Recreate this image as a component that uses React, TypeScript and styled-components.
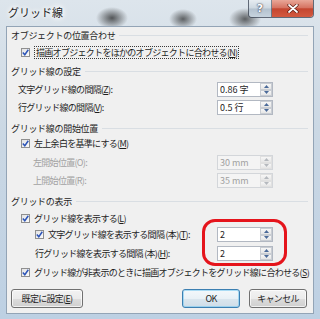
import React from 'react';
import styled, { createGlobalStyle } from 'styled-components';

const GlobalStyle = createGlobalStyle`
  html, body {
    margin: 0;
    padding: 0;
  }
  body {
    width: 320px;
    height: 319px;
    overflow: hidden;
    font-family: "Noto Sans CJK JP", "Noto Sans", sans-serif;
  }
`;

const Window = styled.div`
  position: relative;
  width: 320px;
  height: 319px;
  display: flex;
  flex-direction: column;
  background:
    radial-gradient(ellipse 16px 11px at 112px 18px, rgba(25, 25, 25, 0.7), rgba(25, 25, 25, 0)),
    radial-gradient(ellipse 14px 10px at 183px 19px, rgba(25, 25, 25, 0.65), rgba(25, 25, 25, 0)),
    radial-gradient(ellipse 16px 11px at 245px 19px, rgba(25, 25, 25, 0.65), rgba(25, 25, 25, 0)),
    linear-gradient(180deg, #dde5ec 0%, #cbd8e4 40%, #bdd0e3 100%);
`;

const TitleBar = styled.div`
  height: 26px;
  display: flex;
  justify-content: space-between;
  align-items: flex-start;
`;

const Title = styled.div`
  padding: 5px 0 0 8px;
  font-size: 11px;
  line-height: 14px;
  color: #1c1c1c;
  text-shadow: 0 0 4px #fff, 0 0 6px #fff, 0 0 8px #fff;
`;

const CaptionButtons = styled.div`
  display: flex;
  margin-right: 6px;
  height: 17px;
  border: 1px solid rgba(55, 65, 80, 0.75);
  border-top: none;
  border-radius: 0 0 4px 4px;
  overflow: hidden;
`;

const HelpButton = styled.div`
  width: 22px;
  display: flex;
  align-items: center;
  justify-content: center;
  background: linear-gradient(180deg, #e6ecf1 0%, #cdd7e0 48%, #b3c1ce 52%, #c6d3de 100%);
  border-right: 1px solid rgba(55, 65, 80, 0.6);
  color: #fff;
  font-family: "DejaVu Sans", sans-serif;
  font-weight: bold;
  font-size: 11px;
  text-shadow: 0 0 1px #334, 0 0 2px #334;
`;

const CloseButton = styled.div`
  width: 41px;
  display: flex;
  align-items: center;
  justify-content: center;
  background: linear-gradient(180deg, #e9a798 0%, #d67462 45%, #c44630 52%, #d35a40 100%);
`;

const Client = styled.div`
  flex: 1;
  margin: 0 6px 5px 6px;
  background: #f0f0f0;
  border: 1px solid #93a4b6;
  display: flex;
  flex-direction: column;
  font-size: 9px;
  letter-spacing: -0.7px;
  color: #1e1e1e;
`;

const GroupHeader = styled.div<{ $top: number }>`
  display: flex;
  align-items: center;
  gap: 4px;
  height: 14px;
  margin-top: ${p => p.$top}px;
  padding: 0 5px 0 4px;
  letter-spacing: -0.3px;
  white-space: nowrap;

  &::after {
    content: '';
    flex: 1;
    height: 1px;
    margin-top: 1px;
    background: #d9dee3;
  }
`;

const Row = styled.div<{ $top: number; $indent: number; $h?: number }>`
  display: flex;
  align-items: center;
  height: ${p => p.$h ?? 14}px;
  margin-top: ${p => p.$top}px;
  padding-left: ${p => p.$indent}px;
  padding-right: 40px;
  white-space: nowrap;
`;

const Label = styled.span<{ $disabled?: boolean }>`
  flex: 1;
  color: ${p => (p.$disabled ? '#a2a2a2' : '#1e1e1e')};
`;

const Key = styled.span`
  text-decoration: underline;
`;

const Box = styled.span`
  width: 9px;
  height: 9px;
  box-sizing: border-box;
  border: 1px solid #8f8f8f;
  background: linear-gradient(135deg, #e3e3e3 0%, #fbfbfb 100%);
  display: flex;
  align-items: center;
  justify-content: center;
  margin-right: 4px;
  flex: none;
`;

const Focus = styled.span`
  border: 1px dotted #3a3a3a;
  padding: 0 1px;
  line-height: 11px;
`;

const SpinBox = styled.div<{ $disabled?: boolean }>`
  display: flex;
  width: 56px;
  height: 15px;
  box-sizing: border-box;
  border: 1px solid ${p => (p.$disabled ? '#d3d6da' : '#b2b8c2')};
  background: ${p => (p.$disabled ? '#f4f4f4' : '#ffffff')};
  color: ${p => (p.$disabled ? '#a0a0a0' : '#1e1e1e')};
  letter-spacing: 0;
  flex: none;
`;

const SpinText = styled.div`
  flex: 1;
  padding-left: 2px;
  line-height: 13px;
`;

const SpinButtons = styled.div`
  width: 12px;
  display: flex;
  flex-direction: column;
`;

const SpinHalf = styled.div<{ $disabled?: boolean }>`
  flex: 1;
  display: flex;
  align-items: center;
  justify-content: center;
  box-sizing: border-box;
  border: 1px solid ${p => (p.$disabled ? '#e0e0e0' : '#c9cdd3')};
  background: linear-gradient(180deg, #f7f7f7 0%, #e6e6e6 100%);
`;

const ButtonRow = styled.div`
  display: flex;
  gap: 9px;
  height: 19px;
  margin-top: 10px;
  padding: 0 6px 0 4px;
`;

const Spacer = styled.div`
  flex: 1;
`;

const Button = styled.div<{ $w: number; $default?: boolean }>`
  width: ${p => p.$w}px;
  box-sizing: border-box;
  display: flex;
  align-items: center;
  justify-content: center;
  border: 1px solid ${p => (p.$default ? '#3c7fb1' : '#707070')};
  border-radius: 3px;
  background: ${p =>
    p.$default
      ? 'linear-gradient(180deg, #f3f8fb 0%, #e9f1f6 50%, #dae6ee 51%, #cfdde8 100%)'
      : 'linear-gradient(180deg, #f2f2f2 0%, #ebebeb 50%, #dddddd 51%, #cfcfcf 100%)'};
  box-shadow: inset 0 0 0 1px ${p => (p.$default ? 'rgba(120, 200, 240, 0.6)' : 'rgba(255, 255, 255, 0.7)')};
  color: #1e1e1e;
`;

const Annotation = styled.div`
  position: absolute;
  left: 202px;
  top: 219px;
  width: 85px;
  height: 47px;
  box-sizing: border-box;
  border: 3px solid #e5141c;
  border-radius: 13px;
  pointer-events: none;
`;

function Check() {
  return (
    <Box>
      <svg width="7" height="7" viewBox="0 0 7 7">
        <path d="M0.8 3.6 L2.8 5.8 L6.3 0.8" fill="none" stroke="#2d55b8" strokeWidth="1.5" />
      </svg>
    </Box>
  );
}

function Arrow({ up, disabled }: { up?: boolean; disabled?: boolean }) {
  return (
    <svg width="5" height="3" viewBox="0 0 5 3">
      <path d={up ? 'M0 3 L2.5 0 L5 3 Z' : 'M0 0 L2.5 3 L5 0 Z'} fill={disabled ? '#b5b9be' : '#4b6a99'} />
    </svg>
  );
}

function Spinner({ value, disabled }: { value: string; disabled?: boolean }) {
  return (
    <SpinBox $disabled={disabled}>
      <SpinText>{value}</SpinText>
      <SpinButtons>
        <SpinHalf $disabled={disabled}><Arrow up disabled={disabled} /></SpinHalf>
        <SpinHalf $disabled={disabled}><Arrow disabled={disabled} /></SpinHalf>
      </SpinButtons>
    </SpinBox>
  );
}

export default function App() {
  return (
    <>
      <GlobalStyle />
      <Window>
        <TitleBar>
          <Title>グリッド線</Title>
          <CaptionButtons>
            <HelpButton>?</HelpButton>
            <CloseButton>
              <svg width="12" height="9" viewBox="0 0 12 9">
                <path d="M2 1 L10 8 M10 1 L2 8" stroke="#5a1a10" strokeWidth="3.2" strokeLinecap="round" />
                <path d="M2 1 L10 8 M10 1 L2 8" stroke="#ffffff" strokeWidth="1.8" strokeLinecap="round" />
              </svg>
            </CloseButton>
          </CaptionButtons>
        </TitleBar>
        <Client>
          <GroupHeader $top={1}>オブジェクトの位置合わせ</GroupHeader>
          <Row $top={3} $indent={14}>
            <Check />
            <Focus>描画オブジェクトをほかのオブジェクトに合わせる(<Key>N</Key>)</Focus>
          </Row>

          <GroupHeader $top={5}>グリッド線の設定</GroupHeader>
          <Row $top={4} $indent={11} $h={15}>
            <Label>文字グリッド線の間隔(<Key>Z</Key>):</Label>
            <Spinner value="0.86 字" />
          </Row>
          <Row $top={3} $indent={11} $h={15}>
            <Label>行グリッド線の間隔(<Key>V</Key>):</Label>
            <Spinner value="0.5 行" />
          </Row>

          <GroupHeader $top={6}>グリッド線の開始位置</GroupHeader>
          <Row $top={1} $indent={14}>
            <Check />
            <Label>左上余白を基準にする(<Key>M</Key>)</Label>
          </Row>
          <Row $top={5} $indent={26} $h={15}>
            <Label $disabled>左開始位置(O):</Label>
            <Spinner value="30 mm" disabled />
          </Row>
          <Row $top={3} $indent={26} $h={15}>
            <Label $disabled>上開始位置(R):</Label>
            <Spinner value="35 mm" disabled />
          </Row>

          <GroupHeader $top={6}>グリッドの表示</GroupHeader>
          <Row $top={3} $indent={14}>
            <Check />
            <Label>グリッド線を表示する(<Key>L</Key>)</Label>
          </Row>
          <Row $top={2} $indent={28} $h={15}>
            <Check />
            <Label>文字グリッド線を表示する間隔 (本)(<Key>T</Key>):</Label>
            <Spinner value="2" />
          </Row>
          <Row $top={4} $indent={28} $h={15}>
            <Label>行グリッド線を表示する間隔 (本)(<Key>H</Key>):</Label>
            <Spinner value="2" />
          </Row>
          <Row $top={4} $indent={14}>
            <Check />
            <Label>グリッド線が非表示のときに描画オブジェクトをグリッド線に合わせる(<Key>S</Key>)</Label>
          </Row>

          <ButtonRow>
            <Button $w={72}>既定に設定(<Key>E</Key>)</Button>
            <Spacer />
            <Button $w={58} $default>OK</Button>
            <Button $w={58}>キャンセル</Button>
          </ButtonRow>
        </Client>
        <Annotation />
      </Window>
    </>
  );
}
